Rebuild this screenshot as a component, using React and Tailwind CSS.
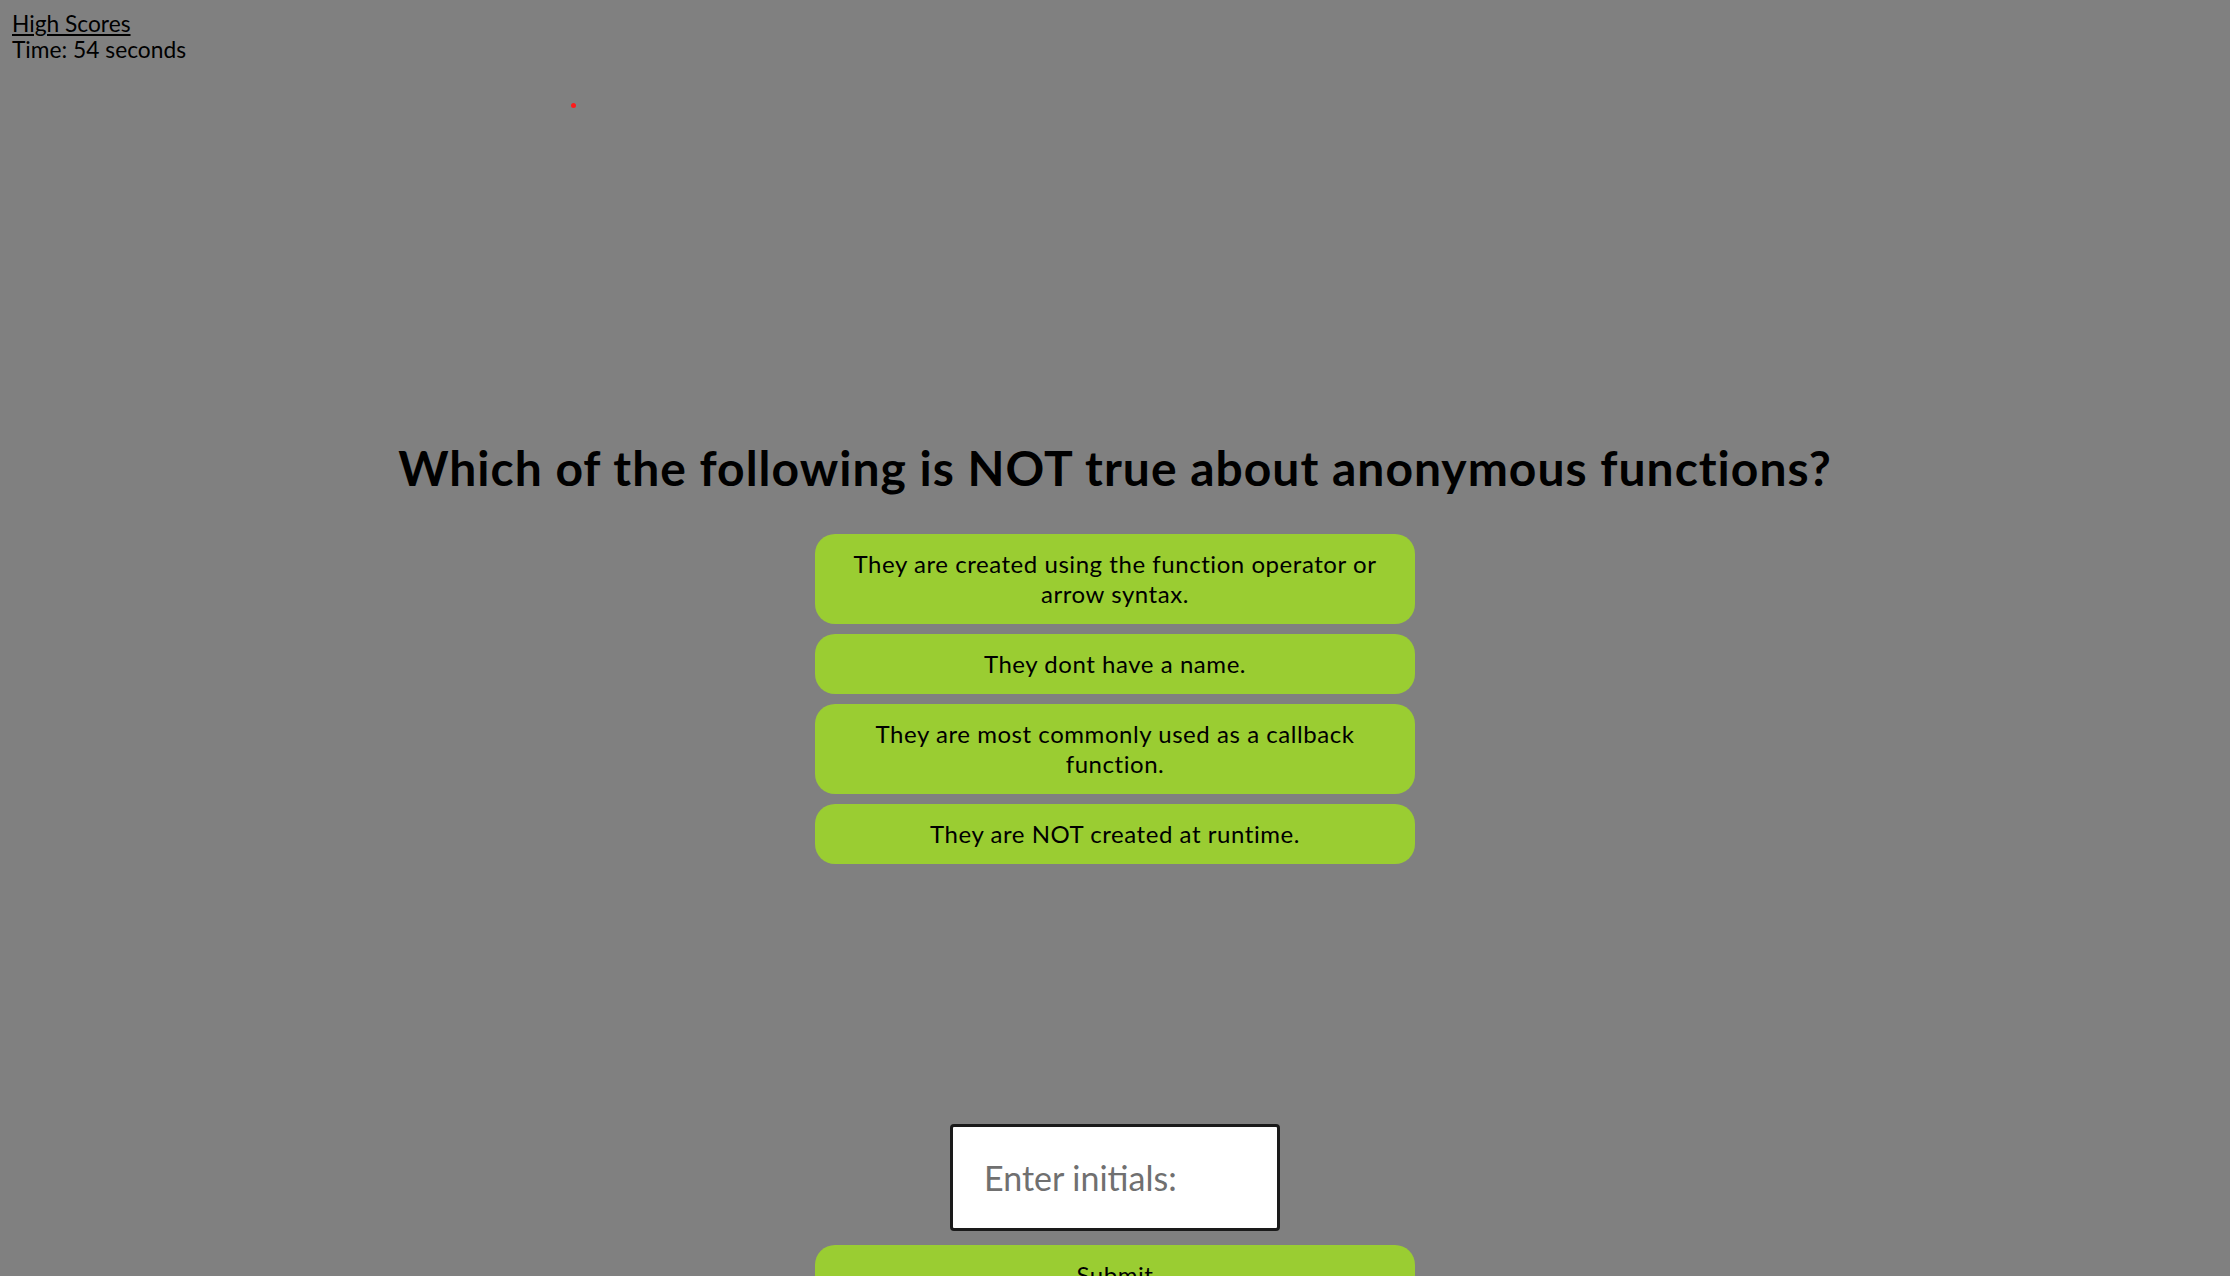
export default function App() {
  const answers = [
    "They are created using the function operator or arrow syntax.",
    "They dont have a name.",
    "They are most commonly used as a callback function.",
    "They are NOT created at runtime.",
  ];
  return (
    <div className="relative h-[1276px] overflow-hidden bg-[#808080] text-black font-['Lato',sans-serif]">
      <div className="pl-[12px] pt-[11px] text-[22.75px] leading-[26px]">
        <a href="#" className="underline">High Scores</a>
        <div>Time: 54 seconds</div>
      </div>
      <div className="absolute left-[571px] top-[103px] h-[5px] w-[5px] rounded-full bg-[#ff1a1a]"></div>
      <div className="flex flex-col items-center">
        <h1 className="mt-[377px] text-[48px] font-bold leading-[56px] tracking-[1px] whitespace-nowrap">
          Which of the following is NOT true about anonymous functions?
        </h1>
        <div className="mt-[38px] flex w-[600px] flex-col gap-[10px]">
          {answers.map((a) => (
            <button
              key={a}
              className="rounded-[20px] bg-[#9acd32] px-[25px] py-[15px] text-center text-[24px] leading-[30px] tracking-[0.55px] text-black"
            >
              {a}
            </button>
          ))}
        </div>
        <input
          type="text"
          placeholder="Enter initials:"
          className="mt-[260px] h-[107px] w-[330px] rounded-[4px] border-[3px] border-[#1a1a1a] bg-white pl-[31px] text-[34px] text-black placeholder:text-[#707070] outline-none"
        />
        <button className="mt-[14px] w-[600px] shrink-0 rounded-[20px] bg-[#9acd32] px-[25px] py-[15px] text-center text-[24px] leading-[30px] tracking-[0.55px] text-black">
          Submit
        </button>
      </div>
    </div>
  );
}
